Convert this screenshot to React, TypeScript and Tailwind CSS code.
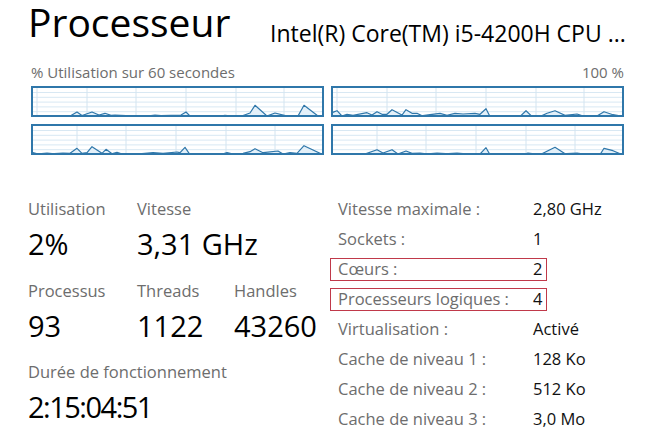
import React from 'react';

type Pt = [number, number];

const gridA = [6, 56, 105, 155, 205, 253];
const gridB = [46, 95, 145, 195, 244];

const charts: { grid: number[]; pts: Pt[] }[] = [
  {
    grid: gridA,
    pts: [
      [0, 30], [20, 30], [40, 29.5], [46, 26], [51, 29.5], [61, 26], [68, 29], [74, 27.3], [80, 29.3], [84, 29],
      [95, 29.5], [120, 29.5], [124, 29], [130, 29.5], [150, 29], [155, 26], [159, 30], [190, 30], [194, 29.3],
      [200, 30], [212, 29.5], [219, 27], [224, 19.3], [236, 30], [244, 27], [256, 30], [267, 30], [273, 19.3], [287, 30], [293, 30],
    ],
  },
  {
    grid: gridA,
    pts: [
      [0, 27], [6, 24.7], [11, 30], [16, 28.3], [22, 29.3], [36, 26.7], [41, 29], [46, 25.7], [51, 28.3], [56, 28.3],
      [61, 23.7], [71, 29], [75, 23.7], [81, 27.3], [86, 27.3], [91, 29.7], [99, 28.7], [109, 27.3], [116, 29.3],
      [124, 27.3], [132, 28], [144, 27.3], [149, 28.3], [155, 22.7], [159, 30.5], [176, 29.8], [189, 30.5], [195, 24.7],
      [201, 30.5], [209, 30.5], [216, 27.3], [224, 24.7], [234, 29.3], [246, 28], [252, 30], [266, 30], [273, 25.7],
      [282, 28.7], [293, 30.5],
    ],
  },
  {
    grid: gridB,
    pts: [
      [0, 28], [7, 30], [16, 29], [22, 29.7], [32, 29], [39, 29.3], [46, 24.3], [51, 29.3], [56, 28.7], [61, 22.7],
      [71, 29.3], [75, 25.3], [81, 29.7], [86, 28.3], [91, 30], [106, 30], [122, 28.7], [132, 29.3], [146, 28],
      [149, 28.7], [154, 23.3], [159, 30.7], [189, 30.7], [196, 28.7], [202, 30], [212, 29.3], [219, 27.7], [224, 24.7],
      [232, 28.7], [247, 27], [252, 30], [259, 28.7], [266, 29.3], [273, 21.7], [292, 30.7],
    ],
  },
  {
    grid: gridB,
    pts: [
      [0, 29.3], [9, 30.7], [32, 30.7], [46, 25.7], [52, 29], [61, 25.7], [67, 30], [75, 27], [81, 29.3], [89, 29],
      [96, 30], [106, 29], [116, 29.7], [126, 29], [136, 30], [149, 30], [155, 23.7], [159, 30.7], [192, 30.7],
      [197, 29], [209, 30.7], [224, 23.3], [234, 29.7], [246, 29], [256, 30.7], [269, 30.7], [273, 24.3], [282, 26.7], [292, 31],
    ],
  },
];

function Chart({ grid, pts }: { grid: number[]; pts: Pt[] }) {
  const line = pts.map(([x, y]) => `${x},${y}`).join(' ');
  const area = `0,31 ${line} 293,31`;
  const rows = [6.5, 11.3, 16.1, 20.9, 25.7];
  return (
    <div className="h-[31px] border-2 border-[#2f77aa] overflow-hidden bg-white">
      <svg viewBox="2 2 289 27" preserveAspectRatio="none" className="block w-full h-full">
        {rows.map((y) => (
          <line key={y} x1="0" x2="293" y1={y} y2={y} stroke="#d8e8f3" strokeWidth="1" />
        ))}
        {grid.map((x) => (
          <line key={x} x1={x} x2={x} y1="0" y2="31" stroke="#d3e4f0" strokeWidth="1" />
        ))}
        <polygon points={area} fill="#e3f0f9" />
        <polyline points={line} fill="none" stroke="#2f77aa" strokeWidth="1.2" strokeLinejoin="round" />
      </svg>
    </div>
  );
}

function Stat({ label, value, className = '', valueClass = '' }: { label: string; value: string; className?: string; valueClass?: string }) {
  return (
    <div className={className}>
      <div className="text-[16.5px] leading-[20px] text-[#6d6d6d] whitespace-nowrap">{label}</div>
      <div className={`text-[29px] leading-[36px] text-black mt-[7px] whitespace-nowrap ${valueClass}`}>{value}</div>
    </div>
  );
}

const specs: { label: string; value: string; boxed?: boolean }[] = [
  { label: 'Vitesse maximale :', value: '2,80 GHz' },
  { label: 'Sockets :', value: '1' },
  { label: 'Cœurs :', value: '2', boxed: true },
  { label: 'Processeurs logiques :', value: '4', boxed: true },
  { label: 'Virtualisation :', value: 'Activé' },
  { label: 'Cache de niveau 1 :', value: '128 Ko' },
  { label: 'Cache de niveau 2 :', value: '512 Ko' },
  { label: 'Cache de niveau 3 :', value: '3,0 Mo' },
];

export default function App() {
  return (
    <div className="w-[650px] h-[447px] bg-white overflow-hidden font-['Open_Sans',sans-serif]">
      {/* Header */}
      <div className="flex items-start pl-[28px] h-[50px]">
        <h1 className="text-[39px] leading-[44px] text-black font-normal w-[242px]">Processeur</h1>
        <span className="text-[23px] leading-[26px] text-black whitespace-nowrap pt-[20px]">Intel(R) Core(TM) i5-4200H CPU ...</span>
      </div>

      {/* Graph */}
      <div className="pl-[31px] pr-[26px]">
        <div className="flex justify-between text-[15px] leading-[18px] text-[#6d6d6d] mt-[13px]">
          <span>% Utilisation sur 60 secondes</span>
          <span>100 %</span>
        </div>
        <div className="grid grid-cols-2 gap-[7px] mt-[5px]">
          {charts.map((c, i) => (
            <Chart key={i} grid={c.grid} pts={c.pts} />
          ))}
        </div>
      </div>

      {/* Stats */}
      <div className="flex mt-[39px]">
        <div className="w-[338px] pl-[28px] pt-[5px]">
          <div className="flex">
            <Stat label="Utilisation" value="2%" className="w-[109px]" />
            <Stat label="Vitesse" value="3,31 GHz" />
          </div>
          <div className="flex mt-[19px]">
            <Stat label="Processus" value="93" className="w-[109px]" />
            <Stat label="Threads" value="1122" className="w-[97px]" />
            <Stat label="Handles" value="43260" />
          </div>
          <div className="mt-[18px]">
            <Stat label="Durée de fonctionnement" value="2:15:04:51" valueClass="tracking-[-1.5px]" />
          </div>
        </div>
        <div className="flex-1 flex flex-col">
          {specs.map((s) =>
            s.boxed ? (
              <div key={s.label} className="h-[30px] flex items-center">
                <div className="-ml-[8px] w-[217px] h-[23px] border border-[#c0394a] flex items-center pl-[7px] text-[16.5px]">
                  <span className="w-[195px] text-[#6d6d6d]">{s.label}</span>
                  <span className="text-[#111]">{s.value}</span>
                </div>
              </div>
            ) : (
              <div key={s.label} className="h-[30px] flex items-center text-[16.5px]">
                <span className="w-[195px] text-[#6d6d6d]">{s.label}</span>
                <span className="text-[#111]">{s.value}</span>
              </div>
            )
          )}
        </div>
      </div>
    </div>
  );
}
